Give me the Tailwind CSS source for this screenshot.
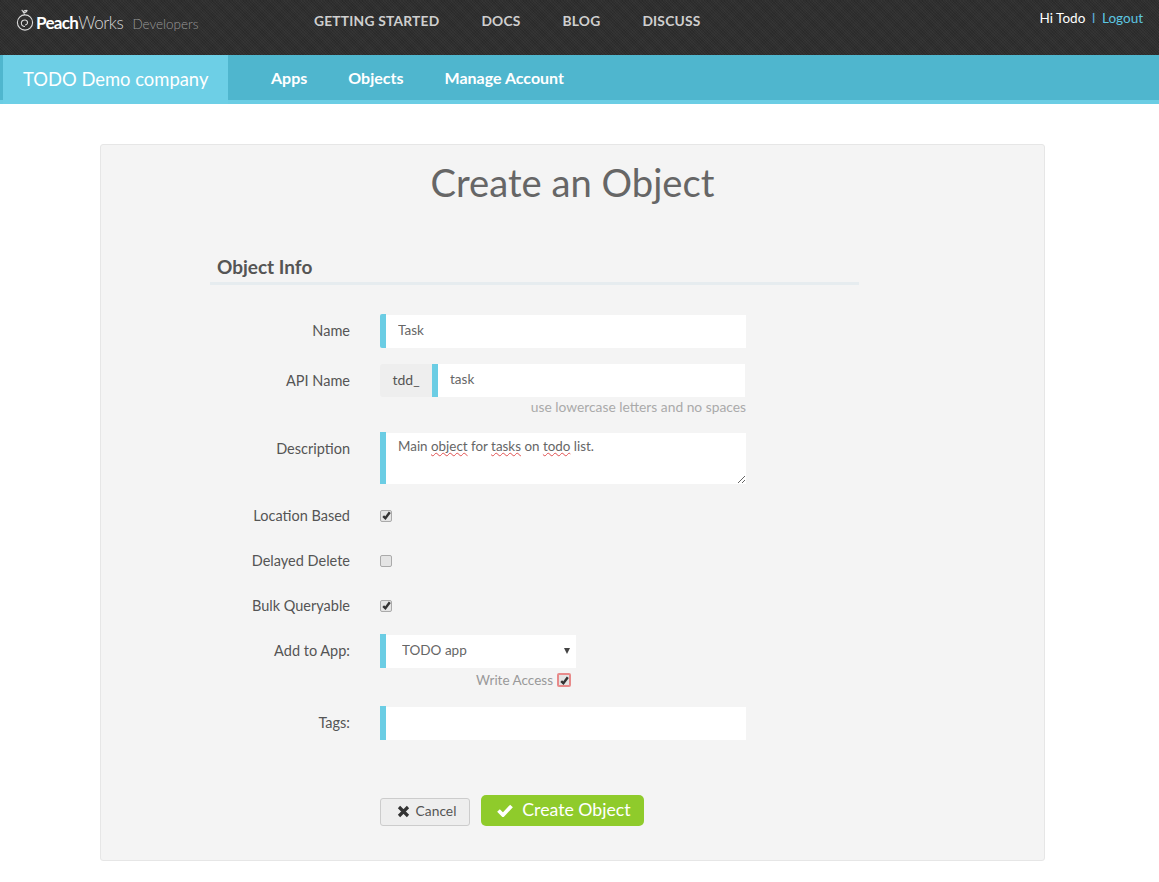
<!DOCTYPE html>
<html lang="en">
<head>
  <meta charset="UTF-8">
  <meta name="viewport" content="width=device-width, initial-scale=1.0">
  <title>Create an Object</title>
  <script src="https://cdn.jsdelivr.net/npm/@tailwindcss/browser@4"></script>
</head>
<body class="bg-white font-['Lato','Open_Sans',sans-serif] text-[#555]">

  <!-- Top bar -->
  <header class="h-[55px] flex bg-[#2e2e2e] bg-[repeating-linear-gradient(45deg,transparent_0px,transparent_1px,#ffffff08_1px,#ffffff08_2px),repeating-linear-gradient(-45deg,transparent_0px,transparent_1px,#00000014_1px,#00000014_2px)]">
    <a href="#" class="w-[314px] pl-[16px] pt-[8px] flex items-start shrink-0">
      <svg class="w-[18px] h-[24px]" viewBox="0 0 18 24" fill="none" stroke="#d8d8d8" stroke-width="1.1">
        <circle cx="9" cy="14.5" r="7.6"/>
        <path d="M9 18.5c-2.600 0-3.900-1.800-3.600-3.800.3-1.900 2-3 3.800-2.700 1.500.3 2.500 1.500 2.300 3-.2 1.200-1.300 2-2.400 1.800"/>
        <path d="M8.500 7c-.2-2-1.200-3.700-2.800-5.200M6.800 4.200c1.200-1.600 2.700-2 4.200-1.700-.4 1.500-2 2.600-4.200 1.700"/>
      </svg>
      <span class="ml-[2px] mt-[3px] text-[17px] leading-[24px] tracking-[-0.7px] text-white font-bold">Peach</span>
      <span class="mt-[3px] text-[17px] leading-[24px] tracking-[-0.4px] text-[#d8d8d8] font-light">Works</span>
      <span class="ml-[9px] mt-[4px] text-[13.500px] leading-[24px] text-[#999] font-light">Developers</span>
    </a>
    <nav class="flex gap-[42px] pt-[12px] text-[13.800px] leading-[18px] font-bold tracking-[0.2px] text-[#cfcfcf]">
      <a href="#">GETTING STARTED</a>
      <a href="#">DOCS</a>
      <a href="#">BLOG</a>
      <a href="#">DISCUSS</a>
    </nav>
    <div class="ml-auto pr-[16px] pt-[9px] text-[13.500px] leading-[18px] text-white">
      Hi Todo <span class="mx-[3px] text-[#5aa9d6]">I</span> <a href="#" class="text-[#5cc6e2]">Logout</a>
    </div>
  </header>

  <!-- Company bar -->
  <div class="h-[49px] flex bg-[#4fb6ce] border-b-[4px] border-[#6bcde4]">
    <div class="ml-[3px] w-[225px] h-[49px] bg-[#6dcfe6] pl-[20px] pt-[11px] text-[18.400px] leading-[26px] text-white shrink-0">TODO Demo company</div>
    <nav class="ml-[43px] flex gap-[41px] pt-[12px] text-[16px] leading-[22px] font-bold text-white">
      <a href="#">Apps</a>
      <a href="#">Objects</a>
      <a href="#">Manage Account</a>
    </nav>
  </div>

  <!-- Panel -->
  <main class="ml-[100px] mt-[40px] w-[945px] h-[717px] bg-[#f4f4f4] border border-[#e6e6e6] rounded-[3px]">
    <h1 class="pt-[12px] text-center text-[38.200px] leading-[50px] font-normal text-[#666]">Create an Object</h1>

    <form class="ml-[109px] mt-[47px] w-[649px]">
      <h2 class="pl-[7px] pb-[2px] border-b-[3px] border-[#e6ecef] text-[19px] leading-[26px] font-bold text-[#555]">Object Info</h2>

      <div class="mt-[29px] flex items-center">
        <label class="w-[140px] text-right text-[14.500px] mr-[30px]">Name</label>
        <div class="w-[366px] h-[34px] flex rounded-[2px] border-l-[6px] border-[#6bcde4] pt-[1px]">
          <input type="text" value="Task" class="w-full bg-white pl-[12px] pb-[2px] text-[13.500px] text-[#666] outline-none">
        </div>
      </div>

      <div class="mt-[16px] flex items-center">
        <label class="w-[140px] text-right text-[14.500px] mr-[30px]">API Name</label>
        <div class="w-[365px] h-[33px] flex">
          <span class="w-[52px] bg-[#eeeeee] rounded-l-[3px] pb-[2px] flex items-center justify-center text-[14px] text-[#555]">tdd_</span>
          <div class="flex-1 flex border-l-[6px] border-[#6bcde4]">
            <input type="text" value="task" class="w-full bg-white pl-[12px] pb-[2px] text-[13.500px] text-[#666] outline-none">
          </div>
        </div>
      </div>
      <p class="w-[536px] mt-[1px] text-right text-[13.800px] leading-[18px] text-[#aaa]">use lowercase letters and no spaces</p>

      <div class="mt-[16px] flex items-start">
        <label class="w-[140px] text-right text-[14.500px] mr-[30px] mt-[6px]">Description</label>
        <div class="relative w-[366px] h-[52px] border-l-[6px] border-[#6bcde4] pt-[1px]">
          <div class="h-full bg-white pl-[12px] pt-[3px] text-[13.400px] leading-[20px] text-[#666]">
            Main <span class="underline decoration-wavy decoration-[#e05050] decoration-1 [text-decoration-skip-ink:none]">object</span> for <span class="underline decoration-wavy decoration-[#e05050] decoration-1 [text-decoration-skip-ink:none]">tasks</span> on <span class="underline decoration-wavy decoration-[#e05050] decoration-1 [text-decoration-skip-ink:none]">todo</span> list.
          </div>
          <svg class="absolute right-[0px] bottom-[0px] w-[9px] h-[9px]" viewBox="0 0 9 9" stroke="#555" stroke-width="0.9">
            <path d="M1 8 8 1M5 8 8 5"/>
          </svg>
        </div>
      </div>

      <div class="mt-[19px] h-[25px] flex items-center">
        <label class="w-[140px] text-right text-[14.500px] mr-[30px]">Location Based</label>
        <span class="w-[12px] h-[12px] rounded-[2px] border border-[#aaa] bg-[#e4e4e4] flex items-center justify-center">
          <svg class="w-[11px] h-[11px] shrink-0" viewBox="0 0 10 10" fill="none" stroke="#333" stroke-width="2.200"><path d="M2 5.500 4 7.500 8 2"/></svg>
        </span>
      </div>

      <div class="mt-[20px] h-[25px] flex items-center">
        <label class="w-[140px] text-right text-[14.500px] mr-[30px]">Delayed Delete</label>
        <span class="w-[12px] h-[12px] rounded-[2px] border border-[#aaa] bg-[#e4e4e4]"></span>
      </div>

      <div class="mt-[20px] h-[25px] flex items-center">
        <label class="w-[140px] text-right text-[14.500px] mr-[30px]">Bulk Queryable</label>
        <span class="w-[12px] h-[12px] rounded-[2px] border border-[#aaa] bg-[#e4e4e4] flex items-center justify-center">
          <svg class="w-[11px] h-[11px] shrink-0" viewBox="0 0 10 10" fill="none" stroke="#333" stroke-width="2.200"><path d="M2 5.500 4 7.500 8 2"/></svg>
        </span>
      </div>

      <div class="mt-[16px] flex items-center">
        <label class="w-[140px] text-right text-[14.500px] mr-[30px]">Add to App:</label>
        <div class="relative w-[196px] h-[34px] border-l-[6px] border-[#6bcde4] pt-[1px]">
          <select class="w-full h-full appearance-none bg-white pl-[16px] pb-[2px] text-[13.500px] text-[#666] outline-none">
            <option>TODO app</option>
          </select>
          <span class="absolute right-[6px] top-[14px] w-0 h-0 border-x-[3px] border-t-[6px] border-x-transparent border-t-[#444]"></span>
        </div>
      </div>
      <div class="w-[361px] mt-[4px] h-[16px] flex items-center justify-end gap-[4px]">
        <span class="text-[13.500px] leading-[16px] text-[#999]">Write Access</span>
        <span class="w-[14px] h-[14px] rounded-[2px] border-2 border-[#e88a8a] bg-[#e4e4e4] flex items-center justify-center">
          <svg class="w-[11px] h-[11px] shrink-0" viewBox="0 0 10 10" fill="none" stroke="#333" stroke-width="2.200"><path d="M2 5.500 4 7.500 8 2"/></svg>
        </span>
      </div>

      <div class="mt-[18px] flex items-center">
        <label class="w-[140px] text-right text-[14.500px] mr-[30px]">Tags:</label>
        <div class="w-[366px] h-[34px] border-l-[6px] border-[#6bcde4] pt-[1px]">
          <input type="text" class="w-full h-full bg-white outline-none">
        </div>
      </div>

      <div class="mt-[55px] ml-[170px] flex items-center gap-[11px]">
        <a href="#" class="mt-[2px] w-[90px] h-[28px] flex items-center justify-center gap-[6px] rounded-[3px] border border-[#ccc] bg-[#eeeeee] text-[13.800px] text-[#555] pl-[3px]">
          <svg class="w-[13px] h-[13px]" viewBox="0 0 13 13" fill="none" stroke="#333" stroke-width="3.200"><path d="M2 2 11 11M11 2 2 11"/></svg>
          Cancel
        </a>
        <a href="#" class="w-[163px] h-[31px] flex items-center justify-center gap-[9px] rounded-[5px] bg-[#8fcb2b] text-[17.700px] text-white pl-[3px]">
          <svg class="w-[16px] h-[13px]" viewBox="0 0 16 13" fill="none" stroke="#fff" stroke-width="3.800"><path d="M1.500 6.500 6 11 14.500 2"/></svg>
          Create Object
        </a>
      </div>
    </form>
  </main>

</body>
</html>
